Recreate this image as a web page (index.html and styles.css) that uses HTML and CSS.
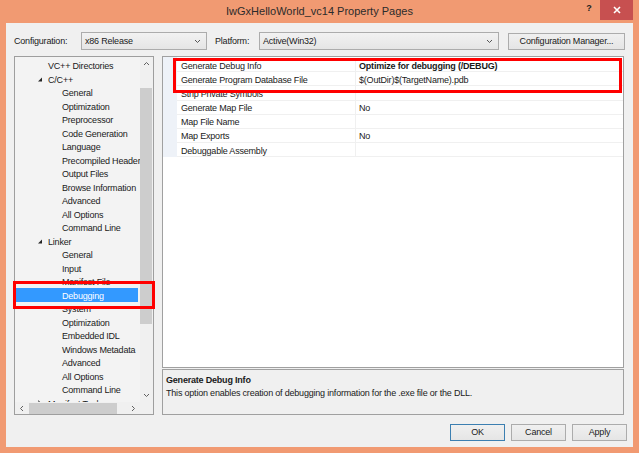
FILE: index.html
```html
<!DOCTYPE html>
<html lang="en">
<head>
  <meta charset="UTF-8" />
  <title>IwGxHelloWorld_vc14 Property Pages</title>
  <link rel="stylesheet" href="styles.css">
</head>
<body>
<div class="window">
  <div class="titlebar">
    <span class="title">IwGxHelloWorld_vc14 Property Pages</span>
    <span class="help">?</span>
    <span class="close">
      <svg width="8" height="8" viewBox="0 0 8 8"><path d="M1 1L7 7M7 1L1 7" stroke="#fff" stroke-width="1.6"/></svg>
    </span>
  </div>

  <div class="client">
    <div class="config-row">
      <span class="label cfg-label">Configuration:</span>
      <div class="combo cfg-combo">
        <span>x86 Release</span>
        <svg class="chev" width="7" height="5" viewBox="0 0 7 5"><path d="M1 1L3.5 3.5L6 1" fill="none" stroke="#555" stroke-width="1"/></svg>
      </div>
      <span class="label plat-label">Platform:</span>
      <div class="combo plat-combo">
        <span>Active(Win32)</span>
        <svg class="chev" width="7" height="5" viewBox="0 0 7 5"><path d="M1 1L3.5 3.5L6 1" fill="none" stroke="#555" stroke-width="1"/></svg>
      </div>
      <div class="btn cfg-manager">Configuration Manager...</div>
    </div>

    <div class="main">
      <div class="tree">
        <div class="tree-body">
          <div class="tree-list">
            <div class="node lvl1">VC++ Directories</div>
            <div class="node lvl1"><span class="twisty"><svg width="12" height="13" viewBox="0 0 12 13"><polygon points="6,3.5 6,7.5 2,7.5" fill="#262626"/></svg></span>C/C++</div>
            <div class="node lvl2">General</div>
            <div class="node lvl2">Optimization</div>
            <div class="node lvl2">Preprocessor</div>
            <div class="node lvl2">Code Generation</div>
            <div class="node lvl2">Language</div>
            <div class="node lvl2">Precompiled Headers</div>
            <div class="node lvl2">Output Files</div>
            <div class="node lvl2">Browse Information</div>
            <div class="node lvl2">Advanced</div>
            <div class="node lvl2">All Options</div>
            <div class="node lvl2">Command Line</div>
            <div class="node lvl1"><span class="twisty"><svg width="12" height="13" viewBox="0 0 12 13"><polygon points="6,3.5 6,7.5 2,7.5" fill="#262626"/></svg></span>Linker</div>
            <div class="node lvl2">General</div>
            <div class="node lvl2">Input</div>
            <div class="node lvl2">Manifest File</div>
            <div class="node lvl2 sel">Debugging</div>
            <div class="node lvl2">System</div>
            <div class="node lvl2">Optimization</div>
            <div class="node lvl2">Embedded IDL</div>
            <div class="node lvl2">Windows Metadata</div>
            <div class="node lvl2">Advanced</div>
            <div class="node lvl2">All Options</div>
            <div class="node lvl2">Command Line</div>
            <div class="node lvl1"><span class="twisty"><svg width="12" height="13" viewBox="0 0 12 13"><polygon points="2.5,2.5 6,6 2.5,9.5" fill="none" stroke="#808080"/></svg></span>Manifest Tool</div>
          </div>
          <div class="vscroll">
            <div class="sb-arrow"><svg width="7" height="5" viewBox="0 0 7 5"><path d="M1 4L3.5 1.5L6 4" fill="none" stroke="#606060"/></svg></div>
            <div class="sb-track"><div class="vthumb"></div></div>
            <div class="sb-arrow"><svg width="7" height="5" viewBox="0 0 7 5"><path d="M1 1L3.5 3.5L6 1" fill="none" stroke="#606060"/></svg></div>
          </div>
        </div>
        <div class="hscroll-row">
          <div class="hscroll">
            <div class="sb-arrow h"><svg width="5" height="7" viewBox="0 0 5 7"><path d="M4 1L1.5 3.5L4 6" fill="none" stroke="#606060"/></svg></div>
            <div class="sb-track h"><div class="hthumb"></div></div>
            <div class="sb-arrow h"><svg width="5" height="7" viewBox="0 0 5 7"><path d="M1 1L3.5 3.5L1 6" fill="none" stroke="#606060"/></svg></div>
          </div>
          <div class="corner"></div>
        </div>
      </div>

      <div class="right">
        <div class="grid">
          <div class="props">
            <div class="prop"><div class="name">Generate Debug Info</div><div class="value strong">Optimize for debugging (/DEBUG)</div></div>
            <div class="prop"><div class="name">Generate Program Database File</div><div class="value">$(OutDir)$(TargetName).pdb</div></div>
            <div class="prop"><div class="name">Strip Private Symbols</div><div class="value"></div></div>
            <div class="prop"><div class="name">Generate Map File</div><div class="value">No</div></div>
            <div class="prop"><div class="name">Map File Name</div><div class="value"></div></div>
            <div class="prop"><div class="name">Map Exports</div><div class="value">No</div></div>
            <div class="prop"><div class="name">Debuggable Assembly</div><div class="value"></div></div>
          </div>
        </div>
        <div class="desc">
          <div class="desc-title">Generate Debug Info</div>
          <div>This option enables creation of debugging information for the .exe file or the DLL.</div>
        </div>
      </div>
    </div>

    <div class="buttons">
      <div class="btn btn-default">OK</div>
      <div class="btn">Cancel</div>
      <div class="btn">Apply</div>
    </div>
  </div>

  <!-- annotation boxes drawn over the screenshot -->
  <div class="mark mark-grid"></div>
  <div class="mark mark-tree"></div>
</div>
</body>
</html>
```

FILE: styles.css
```css
html, body {
  margin: 0;
  padding: 0;
  background: #f19a72;
  font-family: "Liberation Sans", Arial, sans-serif;
  font-size: 9px;
  letter-spacing: -0.2px;
  color: #1a1a1a;
}

.window {
  position: relative;
  width: 639px;
  height: 453px;
  overflow: hidden;
  background: #f19a72;
}

/* title bar */
.titlebar {
  display: flex;
  height: 23px;
  padding-left: 58px;
}

.title {
  flex: 1;
  text-align: center;
  font-size: 11px;
  letter-spacing: 0;
  line-height: 23px;
  color: #2b2b2b;
}

.help {
  width: 16px;
  margin-right: 3px;
  line-height: 16px;
  text-align: center;
  font-weight: bold;
  color: #222;
}

.close {
  width: 33px;
  height: 20px;
  margin-right: 6px;
  background: #c75050;
  display: flex;
  align-items: center;
  justify-content: center;
}

/* client area */
.client {
  margin: 0 6px;
  height: 424px;
  background: #f0f0f0;
  display: flex;
  flex-direction: column;
}

.config-row {
  margin-top: 9px;
  height: 18px;
  padding-left: 8px;
  display: flex;
  align-items: center;
}

.cfg-label { width: 67px; }
.plat-label { width: 44px; margin-left: 8px; }

.combo {
  height: 18px;
  box-sizing: border-box;
  border: 1px solid #acacac;
  background: linear-gradient(#f2f2f2, #e5e5e5);
  display: flex;
  align-items: center;
  padding: 0 5px 0 3px;
}

.combo span { flex: 1; }
.cfg-combo { width: 126px; }
.plat-combo { width: 240px; }

.btn {
  height: 17px;
  box-sizing: border-box;
  border: 1px solid #acacac;
  background: linear-gradient(#f0f0f0, #e5e5e5);
  text-align: center;
  line-height: 15px;
}

.btn-default { border-color: #3c7fb1; }

.cfg-manager {
  width: 117px;
  margin-left: 9px;
}

.main {
  margin-top: 6px;
  height: 359px;
  padding: 0 9px 0 8px;
  display: flex;
  gap: 8px;
}

/* tree */
.tree {
  width: 140px;
  box-sizing: border-box;
  border: 1px solid #9e9e9e;
  background: #f3f3f3;
  display: flex;
  flex-direction: column;
}

.tree-body {
  flex: 1;
  display: flex;
  min-height: 0;
}

.tree-list {
  flex: 1;
  overflow: hidden;
  padding-top: 1.5px;
  white-space: nowrap;
}

.node {
  height: 13.5px;
  box-sizing: border-box;
  padding-top: 1.5px;
  line-height: 13.5px;
}

.lvl1 { padding-left: 33px; }
.lvl2 { padding-left: 47px; }

.node.sel {
  background: #3399ff;
  color: #fff;
  margin: 0 2px 0 1px;
  padding-left: 46px;
}

.twisty {
  display: inline-block;
  width: 12px;
  height: 13px;
  margin-left: -12px;
  vertical-align: top;
}

.twisty svg { display: block; }

.vscroll {
  width: 13px;
  display: flex;
  flex-direction: column;
  background: #f0f0f0;
}

.sb-arrow {
  height: 13px;
  display: flex;
  align-items: center;
  justify-content: center;
}

.sb-track { flex: 1; }

.vthumb {
  margin-top: 18px;
  width: 12px;
  height: 236px;
  background: #cdcdcd;
}

.hscroll-row {
  height: 12px;
  display: flex;
}

.hscroll {
  flex: 1;
  display: flex;
  background: #f0f0f0;
}

.sb-arrow.h {
  width: 13px;
  height: 12px;
}

.sb-track.h { display: flex; align-items: center; }

.hthumb {
  margin-left: 1px;
  width: 88px;
  height: 11px;
  background: #cdcdcd;
}

.corner {
  width: 13px;
  background: #f0f0f0;
}

/* property grid */
.right {
  flex: 1;
  display: flex;
  flex-direction: column;
}

.grid {
  height: 312px;
  box-sizing: border-box;
  border: 1px solid #a0a0a0;
  background: #fff;
}

.props {
  border-left: 14px solid #eef2f8;
  padding-top: 1px;
}

.prop {
  display: flex;
  height: 14.2px;
  box-sizing: border-box;
  border-bottom: 1px solid #f0f0f0;
  line-height: 13.2px;
  white-space: nowrap;
}

.prop .name,
.prop .value {
  padding-top: 1.5px;
  box-sizing: border-box;
}

.prop .name {
  width: 178px;
  padding-left: 4px;
}

.prop .value {
  flex: 1;
  border-left: 1px solid #f0f0f0;
  padding-left: 3px;
}

.prop .strong { font-weight: bold; }

.desc {
  margin-top: 1px;
  height: 46px;
  box-sizing: border-box;
  border: 1px solid #a0a0a0;
  background: #f0f0f0;
  padding: 3.5px 3px;
  line-height: 13px;
}

.desc-title { font-weight: bold; }

/* dialog buttons */
.buttons {
  margin-top: 9px;
  padding-right: 6px;
  display: flex;
  justify-content: flex-end;
  gap: 6px;
}

.buttons .btn { width: 55px; }

/* red annotation boxes */
.mark {
  position: absolute;
  box-sizing: border-box;
  border: 3px solid #ff0000;
}

.mark-grid {
  left: 173px;
  top: 58px;
  width: 449px;
  height: 35px;
}

.mark-tree {
  left: 13px;
  top: 281px;
  width: 142px;
  height: 28px;
}
```
